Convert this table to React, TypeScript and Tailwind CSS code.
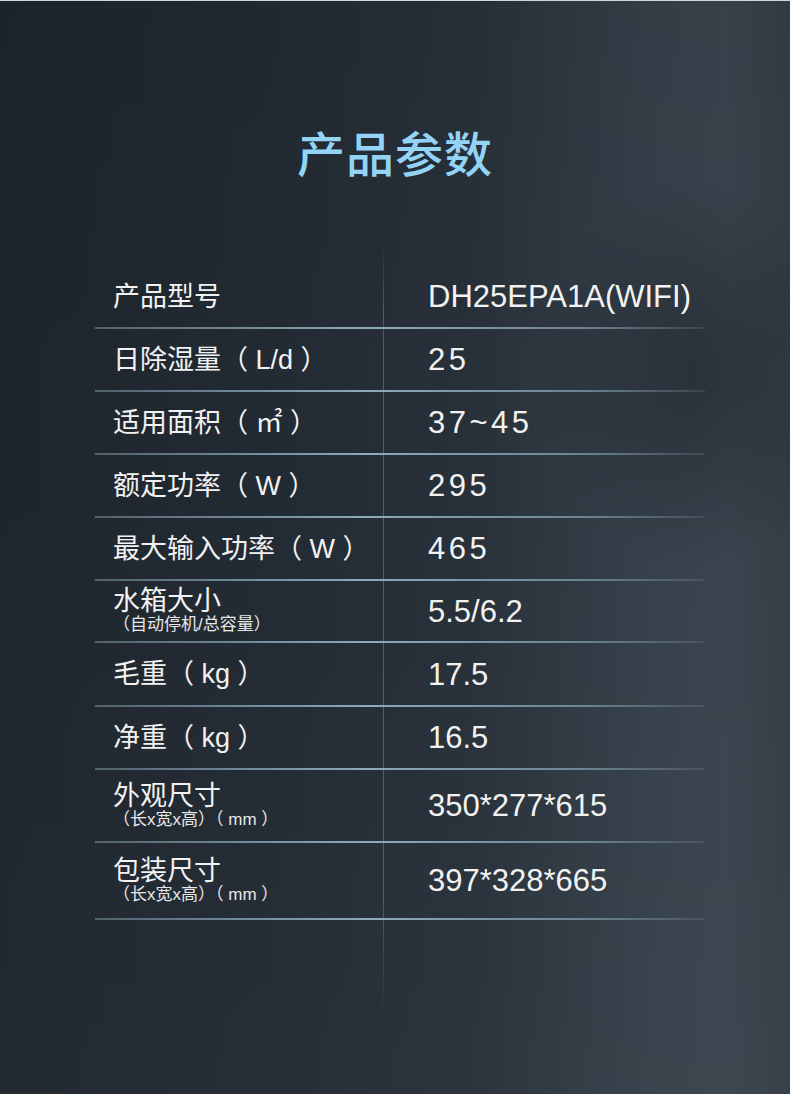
import React from "react";

type Row = {
  label: string;
  sub?: string;
  value: string;
  spaced?: boolean;
  h: number;
};

const rows: Row[] = [
  { label: "产品型号", value: "DH25EPA1A(WIFI)", h: 63 },
  { label: "日除湿量（ L/d ）", value: "25", spaced: true, h: 63 },
  { label: "适用面积（ ㎡ ）", value: "37~45", spaced: true, h: 63 },
  { label: "额定功率（ W ）", value: "295", spaced: true, h: 63 },
  { label: "最大输入功率（ W ）", value: "465", spaced: true, h: 63 },
  { label: "水箱大小", sub: "（自动停机/总容量）", value: "5.5/6.2", h: 62 },
  { label: "毛重（ kg ）", value: "17.5", h: 64 },
  { label: "净重（ kg ）", value: "16.5", h: 63 },
  { label: "外观尺寸", sub: "（长x宽x高）（ mm ）", value: "350*277*615", h: 73 },
  { label: "包装尺寸", sub: "（长x宽x高）（ mm ）", value: "397*328*665", h: 77 },
];

const font = { fontFamily: '"Liberation Sans", "Noto Sans CJK SC", sans-serif' };

export default function App() {
  return (
    <div
      className="relative w-[790px] h-[1094px] overflow-hidden border-t border-[#cfd6dc] bg-[linear-gradient(90deg,#1e252d_0%,#222a33_35%,#28313a_60%,#36404a_82%,#3a444e_92%,#343d46_100%)]"
      style={font}
    >
      <div className="absolute inset-0 bg-[radial-gradient(ellipse_20%_18%_at_88%_34%,rgba(22,28,35,0.45)_0%,rgba(22,28,35,0)_100%)]" />
      <div className="absolute inset-0 bg-[linear-gradient(180deg,rgba(0,0,0,0.05)_0%,rgba(0,0,0,0)_40%,rgba(255,255,255,0.02)_100%)]" />
      <div className="relative flex flex-col items-center">
        <h1
          className="pt-[126px] text-[48px] leading-none font-medium text-[#93d4f6] tracking-[1px]"
          style={{ fontFamily: '"Noto Sans CJK SC", sans-serif' }}
        >
          产品参数
        </h1>
        <div className="relative mt-[71px] w-[610px] pt-[20px] self-start ml-[95px]">
          <div className="absolute left-[288px] top-0 h-[770px] w-px bg-[linear-gradient(180deg,rgba(150,175,190,0)_0%,rgba(150,175,190,0.35)_8%,rgba(150,175,190,0.35)_85%,rgba(150,175,190,0)_100%)]" />
          {rows.map((r) => (
            <div key={r.label} className="flex flex-col" style={{ height: r.h }}>
              <div className="flex flex-1 items-center">
                <div className="w-[288px] pl-[18px] text-[#f2f2f2]">
                  <div className="text-[27px] leading-[28px] whitespace-pre">{r.label}</div>
                  {r.sub && (
                    <div className="text-[17px] leading-[20px] text-[#e8e8e8] whitespace-pre">{r.sub}</div>
                  )}
                </div>
                <div
                  className={
                    "pl-[45px] text-[31px] leading-none text-[#f2f2f2] " +
                    (r.spaced ? "tracking-[3.5px]" : "")
                  }
                >
                  {r.value}
                </div>
              </div>
              <div className="h-[2px] w-full bg-[linear-gradient(90deg,rgba(140,168,185,0.45)_0%,rgba(160,192,210,0.85)_45%,rgba(150,180,198,0.6)_80%,rgba(140,168,185,0.15)_100%)]" />
            </div>
          ))}
        </div>
      </div>
    </div>
  );
}
